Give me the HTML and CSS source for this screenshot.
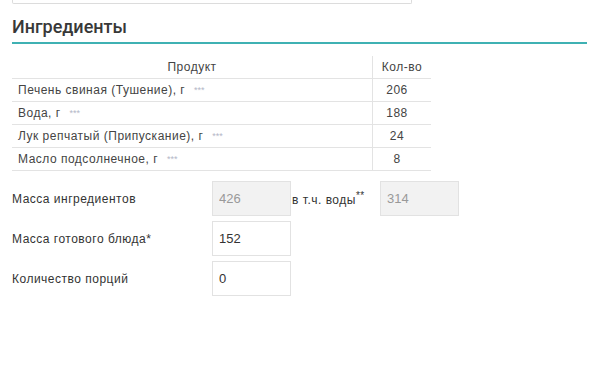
FILE: index.html
```html
<!DOCTYPE html>
<html lang="ru">
<head>
    <meta charset="UTF-8">
    <title>Ингредиенты</title>
    <link rel="stylesheet" href="styles.css">
</head>
<body>
    <div class="page">
        <div class="prev-box"></div>

        <h2 class="section-title">Ингредиенты</h2>

        <table class="ingredients">
            <thead>
                <tr>
                    <th class="col-product">Продукт</th>
                    <th class="col-amount">Кол-во</th>
                </tr>
            </thead>
            <tbody>
                <tr>
                    <td>Печень свиная (Тушение), г <span class="more">***</span></td>
                    <td class="amount">206</td>
                </tr>
                <tr>
                    <td>Вода, г <span class="more">***</span></td>
                    <td class="amount">188</td>
                </tr>
                <tr>
                    <td>Лук репчатый (Припускание), г <span class="more">***</span></td>
                    <td class="amount">24</td>
                </tr>
                <tr>
                    <td>Масло подсолнечное, г <span class="more">***</span></td>
                    <td class="amount">8</td>
                </tr>
            </tbody>
        </table>

        <div class="form">
            <div class="form-row">
                <label class="form-label">Масса ингредиентов</label>
                <input class="field" type="text" value="426" disabled>
                <span class="inline-label">в т.ч. воды<sup>**</sup></span>
                <input class="field" type="text" value="314" disabled>
            </div>
            <div class="form-row">
                <label class="form-label">Масса готового блюда*</label>
                <input class="field" type="text" value="152">
            </div>
            <div class="form-row">
                <label class="form-label">Количество порций</label>
                <input class="field" type="text" value="0">
            </div>
        </div>
    </div>
</body>
</html>
```

FILE: styles.css
```css
body {
    margin: 0;
    background: #fff;
    font-family: "Liberation Sans", Arial, sans-serif;
    color: #333;
}
.page {
    width: 575px;
    padding-left: 12px;
}
.prev-box {
    width: 398px;
    height: 3px;
    border: 1px solid #dcdcdc;
    border-top: none;
    border-radius: 0 0 2px 2px;
}
.section-title {
    margin: 10px 0 0;
    padding-bottom: 3px;
    font-family: Roboto, "Liberation Sans", sans-serif;
    font-size: 18px;
    font-weight: 500;
    line-height: 25px;
    color: #383838;
    border-bottom: 2px solid #3fb1b3;
}
.ingredients {
    margin-top: 12px;
    width: 419px;
    border-collapse: collapse;
    font-size: 12px;
    letter-spacing: 0.5px;
    color: #444;
}
.ingredients th {
    height: 22px;
    padding: 0;
    font-weight: normal;
    text-align: center;
    border-bottom: 1px solid #e3e3e3;
}
.ingredients td {
    height: 22px;
    padding: 0 6px;
    border-bottom: 1px solid #e3e3e3;
}
.ingredients .col-amount,
.ingredients .amount {
    width: 58px;
    text-align: center;
    border-left: 1px solid #e3e3e3;
}
.ingredients .amount {
    width: 48px;
    padding: 0 10px 0 0;
}
.more {
    margin-left: 5px;
    font-size: 9px;
    letter-spacing: 0;
    color: #b3b7c7;
    vertical-align: 1px;
}
.form {
    margin-top: 10px;
    font-size: 12px;
    letter-spacing: 0.5px;
}
.form-row {
    display: flex;
    align-items: center;
    margin-bottom: 5px;
}
.form-label {
    width: 200px;
    color: #333;
}
.field {
    box-sizing: border-box;
    width: 79px;
    height: 35px;
    padding: 0 6px;
    border: 1px solid #e2e2e2;
    background: #fff;
    font-family: "Liberation Sans", Arial, sans-serif;
    font-size: 13px;
    color: #333;
}
.field:disabled {
    background: #f2f2f2;
    color: #999;
}
.inline-label {
    width: 88px;
    padding-left: 1px;
    color: #333;
}
.inline-label sup {
    font-size: 10px;
}
```
